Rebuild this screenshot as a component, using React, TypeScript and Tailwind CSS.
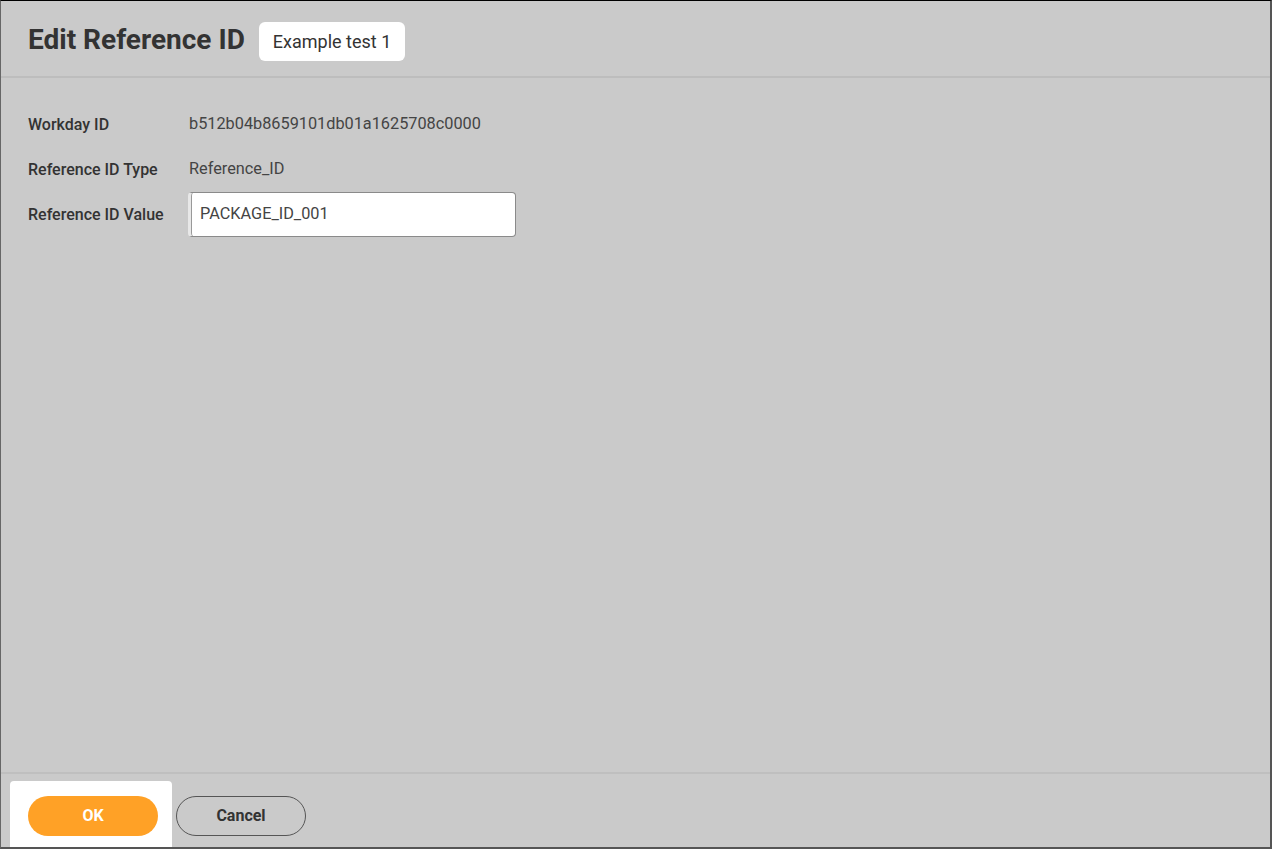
export default function App() {
  const rows = [
    { label: "Workday ID", value: "b512b04b8659101db01a1625708c0000" },
    { label: "Reference ID Type", value: "Reference_ID" },
  ];

  return (
    <div className="flex h-[849px] w-[1272px] flex-col border-t border-r-2 border-b-2 border-l border-t-black border-r-[#555] border-b-[#555] border-l-[#666] bg-[#cacaca] font-['Roboto','Liberation_Sans',sans-serif]">
      <header className="flex h-[77px] items-center gap-[14px] border-b-2 border-[#bdbdbd] pl-[27px]">
        <h1 className="mt-[3px] text-[28px] font-bold text-[#333]">Edit Reference ID</h1>
        <span className="mt-[5px] rounded-[6px] bg-white px-[14px] py-[8px] text-[18px] leading-[23px] text-[#333]">
          Example test 1
        </span>
      </header>

      <main className="flex-1 pt-[24px] pl-[27px]">
        {rows.map((r) => (
          <div key={r.label} className="grid h-[45px] grid-cols-[160px_1fr] items-center">
            <span className="text-[16px] font-medium text-[#333]">{r.label}</span>
            <span className="pl-[1px] text-[16.3px] text-[#444]">{r.value}</span>
          </div>
        ))}
        <div className="grid h-[45px] grid-cols-[160px_1fr] items-center">
          <span className="text-[16px] font-medium text-[#333]">Reference ID Value</span>
          <div className="flex h-[45px] w-[328px] items-center rounded-[4px] border border-[#8a8a8a] border-l-[3px] border-l-[#e8e8e8] bg-white pl-[9px] text-[16.3px] text-[#444] shadow-[inset_1px_0_0_#999]">
            PACKAGE_ID_001
          </div>
        </div>
      </main>

      <footer className="flex h-[75px] items-end border-t-2 border-[#bfbfbf] pl-[9px]">
        <div className="flex h-[66px] items-start gap-[18px] rounded-t-[4px] bg-white pt-[15px] pl-[18px] pr-[14px]">
          <button className="h-[40px] w-[130px] rounded-full bg-[#ffa126] text-[16px] font-bold text-white">
            OK
          </button>
        </div>
        <div className="flex h-[66px] items-start pt-[15px] pl-[4px]">
          <button className="h-[40px] w-[130px] rounded-full border border-[#555] text-[16px] font-bold text-[#333]">
            Cancel
          </button>
        </div>
      </footer>
    </div>
  );
}
